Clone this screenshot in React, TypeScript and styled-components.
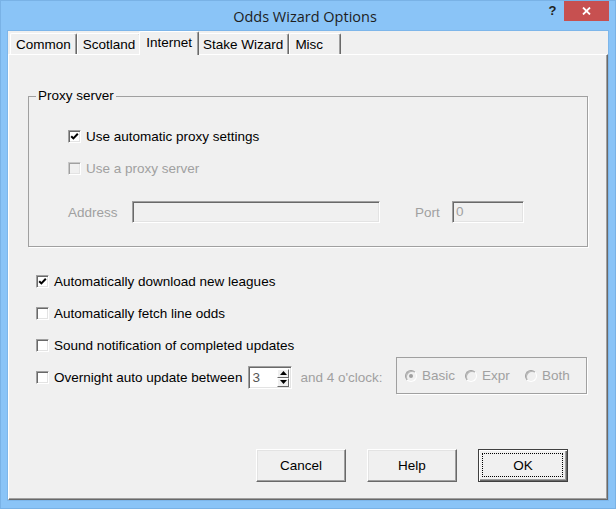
import React from 'react';
import styled, { createGlobalStyle } from 'styled-components';

const GlobalStyle = createGlobalStyle`
  html, body { margin: 0; padding: 0; background: #8ac4f7; }
  body { font-family: "Liberation Sans", Arial, sans-serif; font-size: 13.5px; color: #000; }
  * { box-sizing: border-box; }
`;

const DISABLED = '#a0a0a0';

const Window = styled.div`
  width: 616px;
  height: 509px;
  background: #8ac4f7;
  border: 1px solid #79b2e6;
  display: flex;
  flex-direction: column;
  padding: 0 7px 8px 7px;
`;

const TitleBar = styled.div`
  flex: none;
  height: 30px;
  margin: 0 -7px 0 -7px;
  padding-right: 6px;
  display: grid;
  grid-template-columns: 1fr auto 1fr;
  align-items: start;
`;

const Title = styled.div`
  grid-column: 2;
  font-family: "Open Sans", "Noto Sans", sans-serif;
  font-size: 14.5px;
  line-height: 32px;
  color: #1e1e1e;
  white-space: nowrap;
`;

const Controls = styled.div`
  grid-column: 3;
  justify-self: end;
  display: flex;
  align-items: flex-start;
`;

const HelpGlyph = styled.div`
  width: 23px;
  height: 20px;
  font-family: "Liberation Sans", Arial, sans-serif;
  font-weight: bold;
  font-size: 13px;
  line-height: 20px;
  text-align: center;
  color: #222;
`;

const CloseButton = styled.div`
  width: 45px;
  height: 20px;
  background: #c75050;
  display: flex;
  align-items: center;
  justify-content: center;
`;

const Client = styled.div`
  flex: 1;
  background: #f0f0f0;
  display: flex;
  flex-direction: column;
  box-shadow: 0 0 0 1px #7db6ea;
`;

const TabStrip = styled.div`
  flex: none;
  height: 23px;
  display: flex;
  align-items: flex-end;
  padding-left: 2px;
`;

const Tab = styled.div<{ $active?: boolean }>`
  min-width: 52px;
  height: ${p => (p.$active ? 24 : 21)}px;
  margin: ${p => (p.$active ? '0 -2px -1px -2px' : '0')};
  padding: 0 ${p => (p.$active ? 6 : 5)}px ${p => (p.$active ? 3 : 0)}px;
  position: relative;
  z-index: ${p => (p.$active ? 1 : 0)};
  background: #f0f0f0;
  border-top: 1px solid #fff;
  border-left: 1px solid #fff;
  border-right: 1px solid #696969;
  box-shadow: inset -1px 0 #a0a0a0;
  border-radius: 2px 2px 0 0;
  line-height: 19px;
  white-space: nowrap;
  display: flex;
  align-items: center;
`;

const Page = styled.div`
  flex: 1;
  display: flex;
  flex-direction: column;
  border: 1px solid;
  border-color: #fff #696969 #696969 #fff;
  box-shadow: inset -1px -1px #a0a0a0;
  padding: 33px 19px 17px 19px;
`;

const Group = styled.fieldset`
  margin: 0;
  padding: 0;
  min-width: 0;
  width: 560px;
  border: 1px solid #a0a0a0;
  box-shadow: 1px 1px 0 #fff;
`;

const Legend = styled.legend`
  margin-left: 7px;
  padding: 0 2px;
  line-height: 16px;
`;

const GroupBody = styled.div`
  padding: 16px 0 18px 39px;
  display: flex;
  flex-direction: column;
`;

const Row = styled.div<{ $disabled?: boolean }>`
  height: 32px;
  display: flex;
  align-items: center;
  gap: 5px;
  color: ${p => (p.$disabled ? DISABLED : '#000')};
  white-space: nowrap;
`;

const AddressRow = styled(Row)`
  margin-top: 12px;
  gap: 0;
`;

const FieldLabel = styled.span<{ $w: number; $ml?: number }>`
  width: ${p => p.$w}px;
  margin-left: ${p => p.$ml ?? 0}px;
  color: ${DISABLED};
`;

const TextBox = styled.div<{ $w: number }>`
  width: ${p => p.$w}px;
  height: 22px;
  border: 1px solid;
  border-color: #a0a0a0 #fff #fff #a0a0a0;
  box-shadow: inset 1px 1px #696969, inset -1px -1px #e3e3e3;
  background: #f0f0f0;
  color: ${DISABLED};
  padding: 0 3px;
  line-height: 20px;
`;

const Box = styled.span<{ $disabled?: boolean }>`
  flex: none;
  width: 13px;
  height: 13px;
  border: 1px solid;
  border-color: ${p => (p.$disabled ? '#c8c8c8 #fff #fff #c8c8c8' : '#a0a0a0 #fff #fff #a0a0a0')};
  box-shadow: ${p =>
    p.$disabled ? 'inset 1px 1px #a0a0a0, inset -1px -1px #e3e3e3' : 'inset 1px 1px #696969, inset -1px -1px #e3e3e3'};
  background: ${p => (p.$disabled ? '#f0f0f0' : '#fff')};
  display: flex;
  align-items: center;
  justify-content: center;
`;

const Options = styled.div`
  margin: 18px 0 0 8px;
  display: flex;
  flex-direction: column;
`;

const Spinner = styled.div`
  flex: none;
  margin-left: 1px;
  width: 44px;
  height: 23px;
  display: flex;
  border: 1px solid;
  border-color: #a0a0a0 #fff #fff #a0a0a0;
  box-shadow: inset 1px 1px #696969, inset -1px -1px #e3e3e3;
  padding: 2px 2px 1px 2px;
  background: #fff;
`;

const SpinValue = styled.div`
  flex: 1;
  line-height: 18px;
  padding-left: 1px;
  color: #555;
`;

const SpinButtons = styled.div`
  width: 12px;
  display: flex;
  flex-direction: column;
`;

const SpinButton = styled.div`
  flex: 1;
  background: #f0f0f0;
  border: 1px solid;
  border-color: #fff #696969 #696969 #fff;
  display: flex;
  align-items: center;
  justify-content: center;
`;

const Dim = styled.span<{ $ml?: number }>`
  margin-left: ${p => p.$ml ?? 0}px;
  color: ${DISABLED};
`;

const RadioGroup = styled.div`
  margin-left: auto;
  margin-right: 1px;
  align-self: flex-start;
  margin-top: -4px;
  width: 191px;
  height: 37px;
  flex: none;
  border: 1px solid #a0a0a0;
  box-shadow: 1px 1px 0 #fff;
  display: flex;
  align-items: center;
  padding-left: 8px;
`;

const RadioItem = styled.div`
  width: 60px;
  display: flex;
  align-items: center;
  gap: 5px;
  color: ${DISABLED};
`;

const RadioDot = styled.span<{ $on?: boolean }>`
  width: 12px;
  height: 12px;
  border-radius: 50%;
  border: 1px solid;
  border-color: #a0a0a0 #fff #fff #a0a0a0;
  box-shadow: inset 1px 1px #b8b8b8;
  background: #f0f0f0;
  display: flex;
  align-items: center;
  justify-content: center;
  &::after {
    content: '';
    width: 4px;
    height: 4px;
    border-radius: 50%;
    background: ${p => (p.$on ? '#a0a0a0' : 'transparent')};
  }
`;

const ButtonRow = styled.div`
  margin: auto 20px 0 0;
  display: flex;
  justify-content: flex-end;
  gap: 21px;
`;

const Button = styled.div<{ $default?: boolean }>`
  position: relative;
  width: 90px;
  height: 33px;
  display: flex;
  align-items: center;
  justify-content: center;
  background: #f0f0f0;
  border: 1px solid;
  border-color: ${p => (p.$default ? '#404040' : '#fff #696969 #696969 #fff')};
  box-shadow: ${p =>
    p.$default
      ? 'inset 1px 1px #fff, inset -1px -1px #696969, inset -2px -2px #a0a0a0'
      : 'inset -1px -1px #a0a0a0, inset 1px 1px #e3e3e3'};
  &::after {
    content: '';
    display: ${p => (p.$default ? 'block' : 'none')};
    position: absolute;
    inset: 3px 4px 4px 3px;
    border: 1px dotted #000;
  }
`;

const Check = () => (
  <svg width="9" height="9" viewBox="0 0 9 9">
    <polyline points="1.2,4.2 3.4,6.4 7.8,1.8" fill="none" stroke="#000" strokeWidth="2" />
  </svg>
);

const CheckBox = ({ checked, disabled }: { checked?: boolean; disabled?: boolean }) => (
  <Box $disabled={disabled}>{checked && <Check />}</Box>
);

const Arrow = ({ up }: { up?: boolean }) => (
  <svg width="7" height="4" viewBox="0 0 7 4">
    <polygon points={up ? '3.5,0 7,4 0,4' : '0,0 7,0 3.5,4'} fill="#000" />
  </svg>
);

const tabs = ['Common', 'Scotland', 'Internet', 'Stake Wizard', 'Misc'];

export default function App() {
  return (
    <>
      <GlobalStyle />
      <Window>
        <TitleBar>
          <Title>Odds Wizard Options</Title>
          <Controls>
            <HelpGlyph>?</HelpGlyph>
            <CloseButton>
              <svg width="9" height="8" viewBox="0 0 9 8">
                <path d="M1 0.5 L8 7.5 M8 0.5 L1 7.5" stroke="#fff" strokeWidth="1.8" />
              </svg>
            </CloseButton>
          </Controls>
        </TitleBar>
        <Client>
          <TabStrip>
            {tabs.map(t => (
              <Tab key={t} $active={t === 'Internet'}>
                {t}
              </Tab>
            ))}
          </TabStrip>
          <Page>
            <Group>
              <Legend>Proxy server</Legend>
              <GroupBody>
                <Row>
                  <CheckBox checked />
                  <span>Use automatic proxy settings</span>
                </Row>
                <Row $disabled>
                  <CheckBox disabled />
                  <span>Use a proxy server</span>
                </Row>
                <AddressRow>
                  <FieldLabel $w={64}>Address</FieldLabel>
                  <TextBox $w={248} />
                  <FieldLabel $w={37} $ml={35}>Port</FieldLabel>
                  <TextBox $w={72}>0</TextBox>
                </AddressRow>
              </GroupBody>
            </Group>
            <Options>
              <Row>
                <CheckBox checked />
                <span>Automatically download new leagues</span>
              </Row>
              <Row>
                <CheckBox />
                <span>Automatically fetch line odds</span>
              </Row>
              <Row>
                <CheckBox />
                <span>Sound notification of completed updates</span>
              </Row>
              <Row>
                <CheckBox />
                <span>Overnight auto update between</span>
                <Spinner>
                  <SpinValue>3</SpinValue>
                  <SpinButtons>
                    <SpinButton><Arrow up /></SpinButton>
                    <SpinButton><Arrow /></SpinButton>
                  </SpinButtons>
                </Spinner>
                <Dim $ml={3}>and 4 o'clock:</Dim>
                <RadioGroup>
                  <RadioItem><RadioDot $on /><span>Basic</span></RadioItem>
                  <RadioItem><RadioDot /><span>Expr</span></RadioItem>
                  <RadioItem><RadioDot /><span>Both</span></RadioItem>
                </RadioGroup>
              </Row>
            </Options>
            <ButtonRow>
              <Button>Cancel</Button>
              <Button>Help</Button>
              <Button $default>OK</Button>
            </ButtonRow>
          </Page>
        </Client>
      </Window>
    </>
  );
}
